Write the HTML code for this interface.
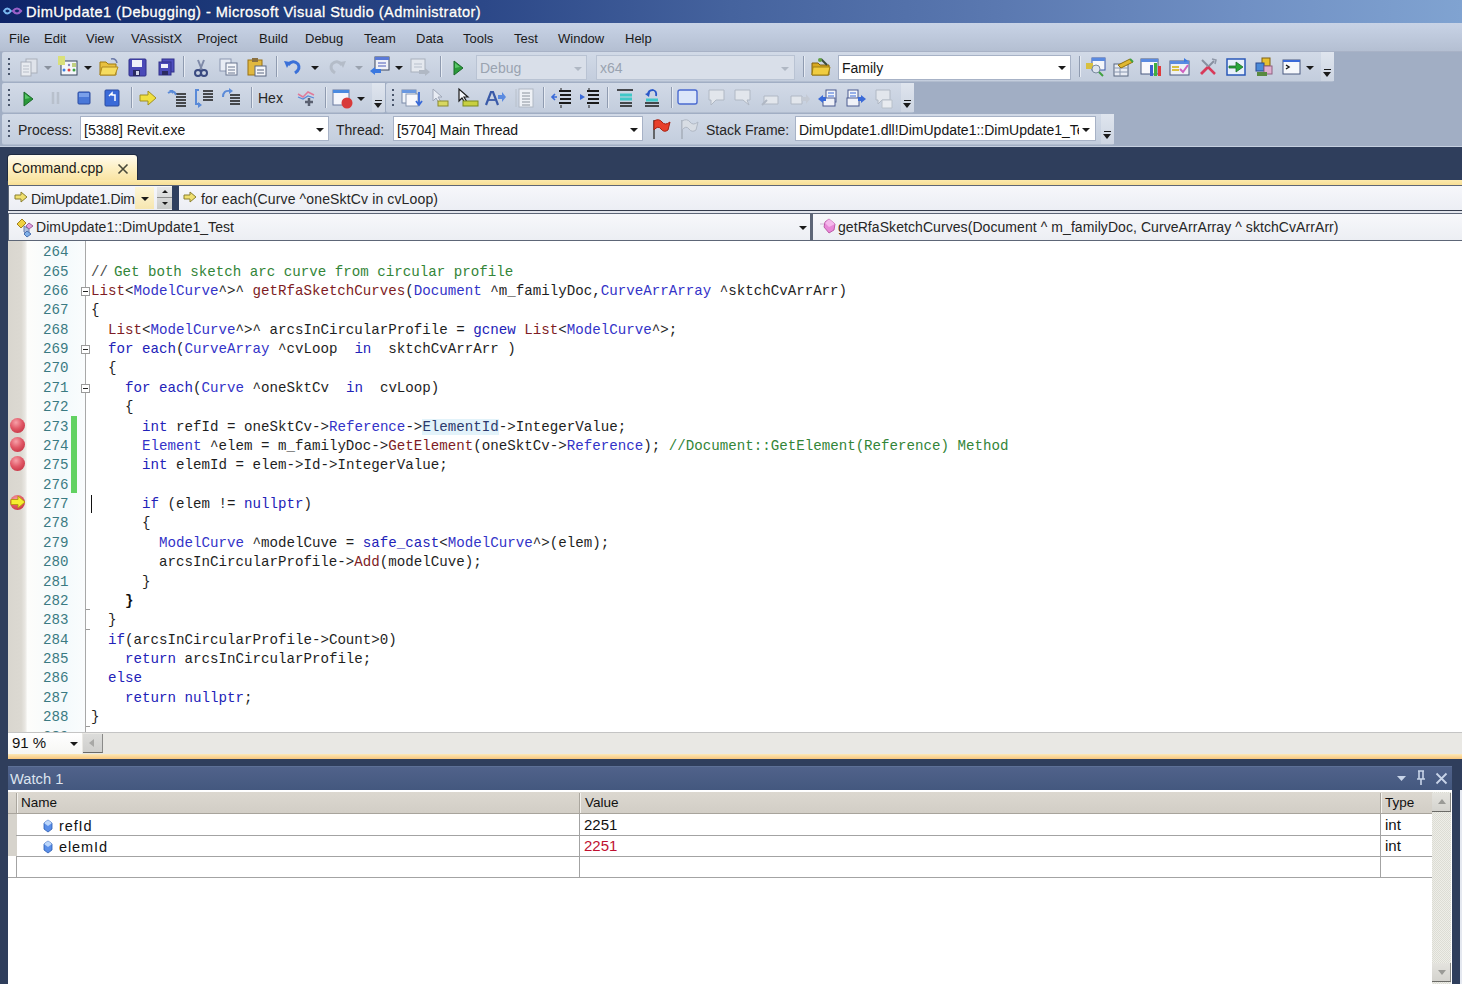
<!DOCTYPE html><html><head><meta charset="utf-8"><style>
*{margin:0;padding:0;box-sizing:border-box}
html,body{width:1462px;height:984px;overflow:hidden;background:#2f3e5c;font-family:"Liberation Sans",sans-serif;}
.a{position:absolute}
svg{position:absolute;overflow:visible}
#title{left:0;top:0;width:1462px;height:23px;background:linear-gradient(to right,#0e2468 0%,#1c3878 15%,#2c4888 33%,#45639e 50%,#5a78b0 68%,#7090c4 85%,#80a3d1 100%);color:#fff;font-size:14.6px;letter-spacing:0.45px;-webkit-text-stroke:0.35px #fff;}
#menu{left:0;top:23px;width:1462px;height:29px;background:linear-gradient(#c8d3e6,#b4bfd2);border-bottom:1px solid #a8b2c6;font-size:13px;color:#1a1a1a}
#menu span{position:absolute;top:8px}
#tray{left:0;top:52px;width:1462px;height:95px;background:#a1aec4}
.tb{position:absolute;background:linear-gradient(#d2dae7,#c3cddd);border-bottom:1px solid #b2bdcf;border-radius:2px}
.ovf{position:absolute;top:0;bottom:0;width:13px;right:0;background:linear-gradient(#dfe5ee,#cdd5e2)}
.grip{position:absolute;left:5px;width:2px;top:7px;height:19px;background:repeating-linear-gradient(#4a566c 0 2px,transparent 2px 5px)}
.sep{position:absolute;width:1px;top:5px;height:21px;background:#8f9bb0;box-shadow:1px 0 0 #e6ebf3}
.cb{position:absolute;background:#fff;border:1px solid #a7b2c6;font-size:14px;color:#161616;padding-left:3px;line-height:21px;white-space:nowrap;overflow:hidden}
.dd{position:absolute;width:0;height:0;border-left:4px solid transparent;border-right:4px solid transparent;border-top:4px solid #1a1a1a}
.lbl{position:absolute;font-size:14px;color:#262626;white-space:nowrap}
#code{left:8px;top:241px;width:1454px;height:492px;background:#fff;overflow:hidden}
.ln{position:absolute;left:19.5px;width:41px;text-align:right;font-family:"Liberation Mono",monospace;font-size:14.17px;color:#3a7a82;line-height:19.375px;height:19.375px}
.cl{position:absolute;left:83px;font-family:"Liberation Mono",monospace;font-size:14.17px;color:#1e1e1e;white-space:pre;line-height:19.375px;height:19.375px}
.k{color:#2222b8}.t{color:#3333c8}.f{color:#7e1c24}.c{color:#338538}
</style></head><body><div id="title" class="a"><span class="a" style="left:26px;top:3.5px;text-shadow:0 0 1px #0a1a40">DimUpdate1 (Debugging) - Microsoft Visual Studio (Administrator)</span><svg style="left:2px;top:4px" width="22" height="14" viewBox="0 0 22 14"><path d="M2 7 Q5 2 9 7 Q5 12 2 7Z" fill="none" stroke="#7ab8f0" stroke-width="2"/><path d="M11 7 Q15 2 19 7 Q15 12 11 7Z" fill="none" stroke="#9a60c8" stroke-width="2.2"/></svg></div><div id="menu" class="a"><span style="left:9px">File</span><span style="left:44px">Edit</span><span style="left:86px">View</span><span style="left:131px">VAssistX</span><span style="left:197px">Project</span><span style="left:259px">Build</span><span style="left:305px">Debug</span><span style="left:364px">Team</span><span style="left:416px">Data</span><span style="left:463px">Tools</span><span style="left:514px">Test</span><span style="left:558px">Window</span><span style="left:625px">Help</span></div><div id="tray" class="a"></div><div class="a" style="left:0;top:146px;width:1462px;height:1px;background:#c6d0e0"></div><div class="tb" style="left:2px;top:52px;width:1332px;height:30px"><div class="grip" style="left:6px;top:6px"></div><div class="ovf"><div class="a" style="left:3px;top:17px;width:7px;height:1px;background:#1a1a1a"></div><div class="dd" style="left:2px;top:20px;border-left-width:4px;border-right-width:4px;border-top-width:5px"></div></div></div><svg style="left:19px;top:57px" width="20" height="20" viewBox="0 0 20 20"><rect x="7" y="2" width="11" height="14" fill="#dfe3ea" stroke="#a9afba"/><rect x="2" y="5" width="10" height="14" fill="#e8ebf0" stroke="#aab0bb"/><path d="M4 9h6M4 12h6M4 15h6" stroke="#b9bec8"/></svg><div class="dd" style="left:44px;top:66px;border-top-color:#8a929e"></div><svg style="left:57px;top:56px" width="22" height="20" viewBox="0 0 22 20"><rect x="4" y="5" width="16" height="14" fill="#f4f6fa" stroke="#36465e"/><rect x="1" y="0" width="7" height="9" fill="#d9e07a"/><circle cx="7" cy="14" r="1.5" fill="#3a7ee0"/><circle cx="12" cy="14" r="1.5" fill="#e04040"/><circle cx="17" cy="14" r="1.5" fill="#3aa040"/><circle cx="12" cy="9" r="1.2" fill="#8080c0"/><rect x="15" y="7" width="4" height="4" fill="#c0d080"/></svg><div class="dd" style="left:84px;top:66px;border-top-color:#1a1a1a"></div><svg style="left:99px;top:57px" width="20" height="20" viewBox="0 0 20 20"><path d="M1 5h6l2 2h8v11H1z" fill="#e8c040" stroke="#a07a10"/><path d="M3 10h16l-3 8H1z" fill="#f6dc60" stroke="#b08a20"/><path d="M12 2q5 -1 6 4" fill="none" stroke="#6a78a8" stroke-width="1.5"/></svg><svg style="left:128px;top:58px" width="20" height="20" viewBox="0 0 20 20"><rect x="1" y="1" width="17" height="17" rx="1" fill="#4a4ab8" stroke="#30308a"/><rect x="4" y="2" width="10" height="7" fill="#f0f2fa"/><rect x="5" y="12" width="7" height="6" fill="#2a2a60"/><rect x="8" y="13" width="3" height="4" fill="#d0d4e8"/></svg><svg style="left:156px;top:58px" width="20" height="20" viewBox="0 0 20 20"><rect x="6" y="1" width="12" height="13" fill="#5050c0" stroke="#30308a"/><rect x="3" y="4" width="12" height="13" fill="#4a4ab8" stroke="#30308a"/><rect x="5" y="6" width="7" height="4" fill="#f0f2fa"/><rect x="6" y="13" width="6" height="4" fill="#2a2a60"/></svg><div class="a" style="left:183px;top:56px;width:1px;height:21px;background:#8f9bb0;box-shadow:1px 0 0 #e6ebf3"></div><svg style="left:193px;top:58px" width="16" height="20" viewBox="0 0 16 20"><path d="M5 2l4 10M11 2l-4 10" stroke="#7f8aa8" stroke-width="2"/><circle cx="5" cy="15" r="3" fill="none" stroke="#3a4a80" stroke-width="2"/><circle cx="11" cy="15" r="3" fill="none" stroke="#3a4a80" stroke-width="2"/></svg><svg style="left:219px;top:57px" width="20" height="20" viewBox="0 0 20 20"><rect x="1" y="2" width="11" height="12" fill="#e8ecf4" stroke="#8a96b0"/><rect x="7" y="6" width="11" height="12" fill="#f4f6fa" stroke="#6a7690"/><path d="M9 10h7M9 13h7M9 16h7" stroke="#6a7690"/></svg><svg style="left:247px;top:57px" width="20" height="20" viewBox="0 0 20 20"><rect x="1" y="3" width="14" height="15" fill="#e0b840" stroke="#9a7010"/><rect x="5" y="1" width="6" height="4" fill="#8a7040"/><rect x="8" y="9" width="11" height="10" fill="#f4f6fa" stroke="#5a6680"/><path d="M10 13h7M10 16h7" stroke="#5a6680"/></svg><div class="a" style="left:276px;top:56px;width:1px;height:21px;background:#8f9bb0;box-shadow:1px 0 0 #e6ebf3"></div><svg style="left:283px;top:57px" width="20" height="20" viewBox="0 0 20 20"><path d="M5 8 Q10 2 15 7 Q18 12 12 16" fill="none" stroke="#3a70d8" stroke-width="3"/><path d="M1 4l6 1-3 6z" fill="#3a70d8"/></svg><div class="dd" style="left:311px;top:66px;border-top-color:#1a1a1a"></div><svg style="left:327px;top:57px" width="20" height="20" viewBox="0 0 20 20"><path d="M15 8 Q10 2 5 7 Q2 12 8 16" fill="none" stroke="#b4bcc8" stroke-width="3"/><path d="M19 4l-6 1 3 6z" fill="#b4bcc8"/></svg><div class="dd" style="left:355px;top:66px;border-top-color:#9aa2ae"></div><svg style="left:369px;top:56px" width="22" height="22" viewBox="0 0 22 22"><rect x="6" y="1" width="14" height="13" fill="#f0f2f8" stroke="#3a4660"/><rect x="6" y="1" width="14" height="3" fill="#5a7ad8"/><path d="M9 7h8M9 10h8" stroke="#4a5ab8"/><path d="M1 15l5-4v2h6v4H6v2z" fill="#3a78e0"/></svg><div class="dd" style="left:395px;top:66px;border-top-color:#1a1a1a"></div><svg style="left:409px;top:57px" width="22" height="22" viewBox="0 0 22 22"><rect x="2" y="2" width="14" height="13" fill="#e4e8ee" stroke="#a8b0bc"/><path d="M5 7h8M5 10h8" stroke="#b8c0cc"/><path d="M21 15l-5-4v2h-6v4h6v2z" fill="#b0b8c4"/></svg><div class="a" style="left:440px;top:56px;width:1px;height:21px;background:#8f9bb0;box-shadow:1px 0 0 #e6ebf3"></div><svg style="left:451px;top:59px" width="14" height="18" viewBox="0 0 14 18"><path d="M3 2l9 7-9 7z" fill="#2a9a3a" stroke="#1a6a2a"/><path d="M4 4l5 4-5 1z" fill="#5ac86a"/></svg><div class="cb" style="left:476px;top:55px;width:111px;height:25px;line-height:25px;background:#d9dfe9;border-color:#b9c3d3;color:#9aa3b0">Debug</div><div class="dd" style="left:574px;top:67px;border-top-color:#b0b8c4"></div><div class="cb" style="left:596px;top:55px;width:199px;height:25px;line-height:25px;background:#d9dfe9;border-color:#b9c3d3;color:#9aa3b0">x64</div><div class="dd" style="left:781px;top:67px;border-top-color:#b0b8c4"></div><div class="a" style="left:803px;top:56px;width:1px;height:21px;background:#8f9bb0;box-shadow:1px 0 0 #e6ebf3"></div><svg style="left:811px;top:57px" width="20" height="20" viewBox="0 0 20 20"><path d="M1 6h6l2 2h9v10H1z" fill="#d8a820" stroke="#806010"/><path d="M2 10h17l-2 8H1z" fill="#f0cc40" stroke="#a08010"/><path d="M10 2l6 6" stroke="#3a4a3a" stroke-width="2"/><circle cx="9" cy="3" r="2" fill="#60a040"/></svg><div class="cb" style="left:838px;top:55px;width:233px;height:25px;line-height:24px">Family</div><div class="dd" style="left:1058px;top:66px;border-top-color:#1a1a1a"></div><div class="a" style="left:1079px;top:56px;width:1px;height:21px;background:#8f9bb0;box-shadow:1px 0 0 #e6ebf3"></div><svg style="left:1085px;top:57px" width="22" height="20" viewBox="0 0 22 20"><rect x="7" y="1" width="13" height="12" fill="#f4f6fa" stroke="#3a58a8"/><rect x="7" y="1" width="13" height="3" fill="#5a8ae0"/><path d="M1 6h7v6H1z" fill="#d8c040"/><circle cx="11" cy="12" r="4" fill="#dde4ee" stroke="#7a8aa0"/><path d="M14 15l4 4" stroke="#40a040" stroke-width="2"/></svg><svg style="left:1112px;top:57px" width="22" height="20" viewBox="0 0 22 20"><rect x="2" y="7" width="14" height="12" fill="#e8ecf4" stroke="#5a6880"/><path d="M2 11h14M2 15h14M8 7v12" stroke="#8a98b0"/><path d="M6 8l12-6 3 3-12 6z" fill="#e0b830" stroke="#907010"/><path d="M18 2l3 3" stroke="#40a040" stroke-width="2"/></svg><svg style="left:1140px;top:57px" width="22" height="20" viewBox="0 0 22 20"><rect x="1" y="2" width="17" height="15" fill="#f8f8fc" stroke="#4a5a80"/><rect x="1" y="2" width="17" height="3" fill="#5a8ae0"/><rect x="10" y="8" width="3" height="11" fill="#3a60d0"/><rect x="14" y="6" width="3" height="13" fill="#40b040"/><rect x="18" y="9" width="3" height="10" fill="#e03a3a"/></svg><svg style="left:1169px;top:57px" width="22" height="20" viewBox="0 0 22 20"><rect x="1" y="4" width="19" height="14" fill="#eef0f6" stroke="#4a5a80"/><rect x="1" y="4" width="19" height="3" fill="#5a8ae0"/><path d="M3 10h7M3 13h7" stroke="#d8c040" stroke-width="2"/><path d="M11 12l3 3 5-7" fill="none" stroke="#d060c0" stroke-width="2"/><path d="M15 1l4 3-4 1z" fill="#3a78e0"/></svg><svg style="left:1198px;top:57px" width="20" height="20" viewBox="0 0 20 20"><path d="M3 17L10 10" stroke="#d83a5a" stroke-width="2.8"/><path d="M10 10L16 4" stroke="#8890a0" stroke-width="2"/><path d="M4 3l6 6" stroke="#8890a0" stroke-width="2"/><path d="M10 10l7 7" stroke="#d83a5a" stroke-width="2.5"/><path d="M14 2l4 1-1 4" fill="none" stroke="#9098a8" stroke-width="1.5"/></svg><svg style="left:1226px;top:57px" width="20" height="20" viewBox="0 0 20 20"><rect x="1" y="2" width="18" height="16" fill="#e8f0fa" stroke="#2a58b8" stroke-width="1.5"/><path d="M3 9h7V5l7 5-7 5v-4H3z" fill="#2aa83a" stroke="#1a6a2a" stroke-width=".8"/></svg><svg style="left:1254px;top:57px" width="20" height="20" viewBox="0 0 20 20"><rect x="8" y="1" width="8" height="8" fill="#e8c030" stroke="#806010"/><rect x="2" y="6" width="8" height="8" fill="#4a8ad8" stroke="#2a4a90"/><rect x="10" y="9" width="8" height="8" fill="#e0b0d0" stroke="#906080"/><rect x="3" y="15" width="10" height="4" fill="#5a8a40"/></svg><svg style="left:1282px;top:57px" width="20" height="20" viewBox="0 0 20 20"><rect x="1" y="3" width="17" height="14" fill="#f6f8fc" stroke="#4a5a80"/><rect x="1" y="3" width="17" height="2" fill="#3a6ad8"/><path d="M4 8l3 2-3 2" fill="none" stroke="#1a1a1a" stroke-width="1.5"/></svg><div class="dd" style="left:1306px;top:66px;border-top-color:#1a1a1a"></div><div class="tb" style="left:2px;top:83px;width:383px;height:30px"><div class="grip" style="left:6px;top:6px"></div><div class="ovf"><div class="a" style="left:3px;top:17px;width:7px;height:1px;background:#1a1a1a"></div><div class="dd" style="left:2px;top:20px;border-left-width:4px;border-right-width:4px;border-top-width:5px"></div></div></div><svg style="left:21px;top:90px" width="14" height="18" viewBox="0 0 14 18"><path d="M3 2l9 7-9 7z" fill="#2a9a3a" stroke="#1a6a2a"/><path d="M4 4l5 4-5 1z" fill="#5ac86a"/></svg><svg style="left:49px;top:89px" width="14" height="18" viewBox="0 0 14 18"><path d="M4 3v12M9 3v12" stroke="#b8c0cc" stroke-width="2.5"/></svg><svg style="left:77px;top:91px" width="14" height="14" viewBox="0 0 14 14"><rect x="1" y="1" width="12" height="12" rx="1" fill="#4a78d8" stroke="#2a4aa0"/><rect x="2" y="2" width="10" height="4" fill="#7aa0ea"/></svg><svg style="left:104px;top:89px" width="16" height="18" viewBox="0 0 16 18"><rect x="1" y="1" width="14" height="16" rx="1" fill="#3a6ad8" stroke="#2a4aa0"/><path d="M5 7l3-3v2h3v6" fill="none" stroke="#fff" stroke-width="1.5"/></svg><div class="a" style="left:131px;top:87px;width:1px;height:21px;background:#8f9bb0;box-shadow:1px 0 0 #e6ebf3"></div><svg style="left:139px;top:90px" width="18" height="16" viewBox="0 0 18 16"><path d="M1 5h8V1l8 7-8 7v-4H1z" fill="#f0e040" stroke="#a09020"/></svg><svg style="left:166px;top:88px" width="22" height="20" viewBox="0 0 22 20"><path d="M10 6h10M10 9h10M10 12h10M10 15h10M10 18h10" stroke="#1a1a1a" stroke-width="1.6"/><path d="M2 5 Q8 1 10 7" fill="none" stroke="#5a8ad8" stroke-width="2"/><path d="M3 2h4v4" fill="#5a8ad8"/></svg><svg style="left:194px;top:87px" width="22" height="22" viewBox="0 0 22 22"><path d="M9 4h10M9 7h10M9 10h10M9 13h10" stroke="#1a1a1a" stroke-width="1.6"/><path d="M5 3H2v14h4" fill="none" stroke="#5a8ad8" stroke-width="2"/><path d="M4 15l4 3-4 3z" fill="#5a8ad8"/></svg><svg style="left:221px;top:87px" width="22" height="22" viewBox="0 0 22 22"><path d="M9 8h10M9 11h10M9 14h10M9 17h10" stroke="#1a1a1a" stroke-width="1.6"/><path d="M2 10 Q2 3 9 4" fill="none" stroke="#5a8ad8" stroke-width="2"/><path d="M8 1l4 3-4 3z" fill="#5a8ad8"/></svg><div class="a" style="left:251px;top:87px;width:1px;height:21px;background:#8f9bb0;box-shadow:1px 0 0 #e6ebf3"></div><div class="lbl" style="left:258px;top:90px">Hex</div><svg style="left:297px;top:88px" width="20" height="20" viewBox="0 0 20 20"><path d="M1 6l5 3 5-5 6 3" fill="none" stroke="#e07a9a" stroke-width="1.5"/><path d="M1 9l5 2 5-3 6 2" fill="none" stroke="#5a8ad8" stroke-width="1.2"/><path d="M12 10v8M8 14h8" stroke="#5a6070" stroke-width="2.5"/></svg><div class="a" style="left:325px;top:87px;width:1px;height:21px;background:#8f9bb0;box-shadow:1px 0 0 #e6ebf3"></div><svg style="left:332px;top:88px" width="22" height="22" viewBox="0 0 22 22"><rect x="1" y="2" width="16" height="15" fill="#f4f6fc" stroke="#6a7aa0"/><rect x="1" y="2" width="16" height="3" fill="#4a8ae0"/><circle cx="15" cy="15" r="5.5" fill="#d83a3a"/></svg><div class="dd" style="left:357px;top:97px;border-top-color:#1a1a1a"></div><div class="tb" style="left:386px;top:83px;width:528px;height:30px"><div class="grip" style="left:6px;top:6px"></div><div class="ovf"><div class="a" style="left:3px;top:17px;width:7px;height:1px;background:#1a1a1a"></div><div class="dd" style="left:2px;top:20px;border-left-width:4px;border-right-width:4px;border-top-width:5px"></div></div></div><svg style="left:401px;top:88px" width="22" height="20" viewBox="0 0 22 20"><rect x="1" y="2" width="14" height="13" fill="#f0f4fa" stroke="#7a8aa8"/><rect x="1" y="2" width="14" height="3" fill="#6a98e0"/><rect x="5" y="6" width="12" height="12" fill="#f8f8fc" stroke="#8a98b0"/><path d="M18 4v12M15 13l3 4 3-4" fill="none" stroke="#3a6ad8" stroke-width="1.8"/></svg><svg style="left:429px;top:88px" width="22" height="20" viewBox="0 0 22 20"><path d="M4 1v12l3-3 3 5 2-1-3-5h4z" fill="#e8ecf4" stroke="#a0a8b8"/><rect x="9" y="13" width="10" height="5" fill="#d8d860" stroke="#8a8a30"/></svg><svg style="left:457px;top:88px" width="22" height="20" viewBox="0 0 22 20"><path d="M2 1v12l3-3 3 5 2-1-3-5h4z" fill="#f4f6fa" stroke="#1a1a1a" stroke-width="1.2"/><rect x="6" y="13" width="15" height="5" fill="#c8d040" stroke="#7a8a20"/></svg><svg style="left:485px;top:88px" width="22" height="20" viewBox="0 0 22 20"><path d="M1 17l5-13h2l5 13" fill="none" stroke="#3a5aa8" stroke-width="2.2"/><path d="M3 12h7" stroke="#3a5aa8" stroke-width="1.8"/><path d="M13 7h4V4l4 5-4 5v-3h-4z" fill="#5a8ae0"/></svg><svg style="left:514px;top:88px" width="20" height="20" viewBox="0 0 20 20"><rect x="5" y="1" width="14" height="18" fill="#eef1f6" stroke="#b0b8c4"/><path d="M8 5h8M8 8h8M8 11h8M8 14h8M8 17h8" stroke="#8a929c"/><path d="M2 1v18" stroke="#b8c0ca"/></svg><div class="a" style="left:543px;top:87px;width:1px;height:21px;background:#8f9bb0;box-shadow:1px 0 0 #e6ebf3"></div><svg style="left:551px;top:88px" width="22" height="20" viewBox="0 0 22 20"><path d="M8 3h12M9 7h11M9 11h11M8 15h12" stroke="#1a1a1a" stroke-width="2"/><path d="M6 9L1 9M4 6l-3 3 3 3" fill="none" stroke="#3a6ad8" stroke-width="1.6"/><path d="M10 0v2M10 17v3" stroke="#1a1a1a"/></svg><svg style="left:579px;top:88px" width="22" height="20" viewBox="0 0 22 20"><path d="M8 3h12M9 7h11M9 11h11M8 15h12" stroke="#1a1a1a" stroke-width="2"/><path d="M1 6l5 3-5 3z" fill="#3a6ad8"/><path d="M10 0v2M10 17v3" stroke="#1a1a1a"/></svg><div class="a" style="left:607px;top:87px;width:1px;height:21px;background:#8f9bb0;box-shadow:1px 0 0 #e6ebf3"></div><svg style="left:615px;top:88px" width="20" height="20" viewBox="0 0 20 20"><path d="M2 2h16M5 18h12" stroke="#1a1a1a" stroke-width="1.5"/><path d="M5 7h12M5 11h12" stroke="#40c8c8" stroke-width="3"/><path d="M5 15h12" stroke="#1a1a1a" stroke-width="1.5"/></svg><svg style="left:642px;top:88px" width="20" height="20" viewBox="0 0 20 20"><path d="M3 15h14M3 18h14" stroke="#1a1a1a" stroke-width="1.5"/><path d="M4 12h12" stroke="#40c8c8" stroke-width="3"/><path d="M6 7 Q6 2 11 2 Q15 3 14 8" fill="none" stroke="#2a58c8" stroke-width="1.8"/><path d="M3 6l4 3 1-5z" fill="#2a58c8"/></svg><div class="a" style="left:671px;top:87px;width:1px;height:21px;background:#8f9bb0;box-shadow:1px 0 0 #e6ebf3"></div><svg style="left:677px;top:88px" width="22" height="18" viewBox="0 0 22 18"><rect x="1" y="2" width="19" height="14" rx="2" fill="#dbe6fa" stroke="#4a6ad0" stroke-width="1.4"/></svg><svg style="left:705px;top:88px" width="22" height="20" viewBox="0 0 22 20"><path d="M4 2h15v10h-8l-5 5v-5H4z" fill="#e2e6ec" stroke="#b0b8c4"/></svg><svg style="left:733px;top:88px" width="22" height="20" viewBox="0 0 22 20"><path d="M2 2h15v10h-3l2 5-6-5H2z" fill="#e2e6ec" stroke="#b0b8c4"/></svg><svg style="left:761px;top:88px" width="22" height="20" viewBox="0 0 22 20"><path d="M3 8h14v8H3z" fill="#e2e6ec" stroke="#b0b8c4"/><path d="M1 17l5-5" stroke="#b0b8c4" stroke-width="2"/></svg><svg style="left:789px;top:88px" width="22" height="20" viewBox="0 0 22 20"><path d="M2 8h11v8H2z" fill="#e2e6ec" stroke="#b0b8c4"/><path d="M12 9h5V6l4 5-4 5v-3h-5z" fill="#c4cad4"/></svg><svg style="left:817px;top:88px" width="22" height="20" viewBox="0 0 22 20"><rect x="9" y="2" width="10" height="12" fill="#f4f6fa" stroke="#4a5a90"/><path d="M11 5h6M11 8h6" stroke="#3a6ad8"/><rect x="6" y="10" width="12" height="8" fill="#f0f2f8" stroke="#4a5a90"/><path d="M1 11l5-4v2h3v4H6v2z" fill="#3a6ad8"/></svg><svg style="left:845px;top:88px" width="22" height="20" viewBox="0 0 22 20"><rect x="3" y="2" width="10" height="12" fill="#f4f6fa" stroke="#4a5a90"/><path d="M5 5h6M5 8h6" stroke="#3a6ad8"/><rect x="2" y="10" width="12" height="8" fill="#f0f2f8" stroke="#4a5a90"/><path d="M21 11l-5-4v2h-3v4h3v2z" fill="#3a6ad8"/></svg><svg style="left:873px;top:88px" width="22" height="22" viewBox="0 0 22 22"><path d="M3 2h14v10H9l-4 4v-4H3z" fill="#e2e6ec" stroke="#b0b8c4"/><path d="M9 12h10v8H9z" fill="#e8ebf0" stroke="#b8c0ca"/></svg><div class="tb" style="left:2px;top:114px;width:1112px;height:31px"><div class="grip" style="left:6px;top:6px"></div><div class="ovf"><div class="a" style="left:3px;top:17px;width:7px;height:1px;background:#1a1a1a"></div><div class="dd" style="left:2px;top:20px;border-left-width:4px;border-right-width:4px;border-top-width:5px"></div></div></div><div class="lbl" style="left:18px;top:122px">Process:</div><div class="cb" style="left:80px;top:116px;width:249px;height:25px;line-height:26px">[5388] Revit.exe</div><div class="dd" style="left:316px;top:128px;border-top-color:#1a1a1a"></div><div class="lbl" style="left:336px;top:122px">Thread:</div><div class="cb" style="left:393px;top:116px;width:250px;height:25px;line-height:26px">[5704] Main Thread</div><div class="dd" style="left:630px;top:128px;border-top-color:#1a1a1a"></div><svg style="left:651px;top:118px" width="20" height="22" viewBox="0 0 20 22"><path d="M3 2v19" stroke="#4a4a4a" stroke-width="1.6"/><path d="M3 3q5-3 8 1t8 0l-2 8q-4 3-7-1t-7 1z" fill="#e8402a" stroke="#a82010"/></svg><svg style="left:679px;top:118px" width="20" height="22" viewBox="0 0 20 22"><path d="M3 2v19" stroke="#a8b0bc" stroke-width="1.6"/><path d="M3 3q5-3 8 1t8 0l-2 8q-4 3-7-1t-7 1z" fill="#d8dde4" stroke="#b0b8c4"/></svg><div class="lbl" style="left:706px;top:122px">Stack Frame:</div><div class="cb" style="left:795px;top:116px;width:301px;height:25px;line-height:26px"><span style="display:inline-block;width:280px;overflow:hidden;vertical-align:top">DimUpdate1.dll!DimUpdate1::DimUpdate1_Te</span></div><div class="dd" style="left:1082px;top:128px;border-top-color:#1a1a1a"></div><div class="a" style="left:7px;top:154px;width:131px;height:27px;border-radius:4px 4px 0 0;background:#1e2a40"></div><div class="a" style="left:8px;top:155px;width:129px;height:26px;border-radius:3px 3px 0 0;background:linear-gradient(#fffbee,#fdf0c4 50%,#f9e3a0);"></div><div class="a" style="left:12px;top:160px;font-size:14px;color:#1a1a1a">Command.cpp</div><svg style="left:117px;top:163px" width="12" height="12" viewBox="0 0 12 12"><path d="M1.5 1.5l9 9M10.5 1.5l-9 9" stroke="#4a4a3a" stroke-width="1.6"/></svg><div class="a" style="left:8px;top:180px;width:1454px;height:5px;background:linear-gradient(#fbe9ae,#f8df95)"></div><div class="a" style="left:8px;top:185px;width:1454px;height:56px;background:#5d6677"></div><div class="a" style="left:9px;top:186px;width:163px;height:24px;background:linear-gradient(#f6f7fb,#eceef4)"></div><div class="a" style="left:135px;top:187px;width:19px;height:22px;background:linear-gradient(#fdf6d8,#f6e6b0)"></div><div class="dd" style="left:141px;top:197px;border-top-color:#1a1a1a"></div><div class="a" style="left:157px;top:187px;width:15px;height:22px;background:linear-gradient(#e8e9ea,#c8cac8)"></div><div class="a" style="left:157px;top:197px;width:15px;height:1px;background:#8a8c8c"></div><div class="a" style="left:162px;top:190px;width:0;height:0;border-left:3px solid transparent;border-right:3px solid transparent;border-bottom:3px solid #1a1a1a"></div><div class="a" style="left:162px;top:202px;width:0;height:0;border-left:3px solid transparent;border-right:3px solid transparent;border-top:3px solid #1a1a1a"></div><div class="a" style="left:172px;top:186px;width:7px;height:25px;background:#2e3f5f"></div><div class="a" style="left:179px;top:186px;width:1283px;height:24px;background:linear-gradient(#f6f7fb,#eceef4)"></div><svg style="left:14px;top:191px" width="14" height="12" viewBox="0 0 14 12"><path d="M1 4h6V1l6 5-6 5V8H1z" fill="#f0e070" stroke="#8a8030"/></svg><div class="lbl" style="left:31px;top:191px;width:105px;overflow:hidden;letter-spacing:-0.2px">DimUpdate1.Dim</div><svg style="left:183px;top:191px" width="14" height="12" viewBox="0 0 14 12"><path d="M1 4h6V1l6 5-6 5V8H1z" fill="#f0e070" stroke="#8a8030"/></svg><div class="lbl" style="left:201px;top:191px;letter-spacing:0.14px">for each(Curve ^oneSktCv in cvLoop)</div><div class="a" style="left:8px;top:210px;width:1454px;height:1px;background:#343c4c"></div><div class="a" style="left:8px;top:211px;width:1454px;height:2px;background:#e2e5ec"></div><div class="a" style="left:9px;top:214px;width:801px;height:26px;background:linear-gradient(#f7f8fb,#eceef3)"></div><div class="a" style="left:813px;top:214px;width:649px;height:26px;background:linear-gradient(#f7f8fb,#eceef3)"></div><div class="dd" style="left:799px;top:226px;border-top-color:#1a1a1a"></div><svg style="left:15px;top:218px" width="20" height="20" viewBox="0 0 20 20"><path d="M2 6l5-5 4 4-5 5z" fill="#f0d040" stroke="#a08020"/><path d="M9 8l5 3v6l-5-3z" fill="#b0c0e0" stroke="#6a80b0"/><path d="M14 5l4 3-4 3-3-3z" fill="#e0a0e0" stroke="#a060a0"/><path d="M12 13l4 3-4 3-3-3z" fill="#80b0e8" stroke="#4a70b0"/></svg><div class="lbl" style="left:36px;top:219px;letter-spacing:0.04px">DimUpdate1::DimUpdate1_Test</div><svg style="left:819px;top:218px" width="18" height="16" viewBox="0 0 18 16"><path d="M1 6h5" stroke="#d0b8d8"/><path d="M10 1l6 5-1 6-5 3-5-6 1-5z" fill="#e888d8" stroke="#b04898" stroke-width=".8"/><path d="M10 1l6 5-6 3-4-4z" fill="#f4b8ec"/></svg><div class="lbl" style="left:838px;top:219px;letter-spacing:0.07px">getRfaSketchCurves(Document ^ m_familyDoc, CurveArrArray ^ sktchCvArrArr)</div><div id="code" class="a"><div class="a" style="left:0;top:0;width:19px;height:492px;background:linear-gradient(to right,#d9d6cf 0%,#dcd9d2 70%,#e9e7e2 90%,#f8f8f6 100%)"></div><div class="a" style="left:19px;top:0;width:58px;height:492px;background:linear-gradient(to right,#fdfdfb,#f4fafc 60%,#fafcfd)"></div><div class="a" style="left:77px;top:0;width:1px;height:492px;background:#a8a8a8"></div><div class="a" style="left:63px;top:175px;width:6px;height:77px;background:#62d262"></div><div class="ln" style="top:2.20px">264</div><div class="ln" style="top:21.57px">265</div><div class="cl" style="top:21.57px"><span style="color:#4a4a4a">// </span><span class="c" style="margin-left:-2.6px">Get both sketch arc curve from circular profile</span></div><div class="ln" style="top:40.95px">266</div><div class="cl" style="top:40.95px"><span class="f">List</span>&lt;<span class="t">ModelCurve</span>^&gt;^ <span class="f">getRfaSketchCurves</span>(<span class="t">Document</span> ^m_familyDoc,<span class="t">CurveArrArray</span> ^sktchCvArrArr)</div><div class="ln" style="top:60.33px">267</div><div class="cl" style="top:60.33px">{</div><div class="ln" style="top:79.70px">268</div><div class="cl" style="top:79.70px">  <span class="f">List</span>&lt;<span class="t">ModelCurve</span>^&gt;^ arcsInCircularProfile = <span class="k">gcnew</span> <span class="f">List</span>&lt;<span class="t">ModelCurve</span>^&gt;;</div><div class="ln" style="top:99.08px">269</div><div class="cl" style="top:99.08px">  <span class="k">for each</span>(<span class="t">CurveArray</span> ^cvLoop  <span class="k">in</span>  sktchCvArrArr )</div><div class="ln" style="top:118.45px">270</div><div class="cl" style="top:118.45px">  {</div><div class="ln" style="top:137.82px">271</div><div class="cl" style="top:137.82px">    <span class="k">for each</span>(<span class="t">Curve</span> ^oneSktCv  <span class="k">in</span>  cvLoop)</div><div class="ln" style="top:157.20px">272</div><div class="cl" style="top:157.20px">    {</div><div class="ln" style="top:176.57px">273</div><div class="cl" style="top:176.57px">      <span class="k">int</span> refId = oneSktCv-&gt;<span class="t">Reference</span>-&gt;<span style="color:#2c3a6c;background:#e3f3fa">ElementId</span>-&gt;IntegerValue;</div><div class="ln" style="top:195.95px">274</div><div class="cl" style="top:195.95px">      <span class="t">Element</span> ^elem = m_familyDoc-&gt;<span class="f">GetElement</span>(oneSktCv-&gt;<span class="t">Reference</span>); <span class="c">//Document::GetElement(Reference) Method</span></div><div class="ln" style="top:215.32px">275</div><div class="cl" style="top:215.32px">      <span class="k">int</span> elemId = elem-&gt;Id-&gt;IntegerValue;</div><div class="ln" style="top:234.70px">276</div><div class="ln" style="top:254.07px">277</div><div class="cl" style="top:254.07px">      <span class="k">if</span> (elem != <span class="k">nullptr</span>)</div><div class="ln" style="top:273.45px">278</div><div class="cl" style="top:273.45px">      {</div><div class="ln" style="top:292.82px">279</div><div class="cl" style="top:292.82px">        <span class="t">ModelCurve</span> ^modelCuve = <span class="k">safe_cast</span>&lt;<span class="t">ModelCurve</span>^&gt;(elem);</div><div class="ln" style="top:312.20px">280</div><div class="cl" style="top:312.20px">        arcsInCircularProfile-&gt;<span class="f">Add</span>(modelCuve);</div><div class="ln" style="top:331.57px">281</div><div class="cl" style="top:331.57px">      }</div><div class="ln" style="top:350.95px">282</div><div class="cl" style="top:350.95px">    <span style="font-weight:bold;color:#111">}</span></div><div class="ln" style="top:370.32px">283</div><div class="cl" style="top:370.32px">  }</div><div class="ln" style="top:389.70px">284</div><div class="cl" style="top:389.70px">  <span class="k">if</span>(arcsInCircularProfile-&gt;Count&gt;0)</div><div class="ln" style="top:409.07px">285</div><div class="cl" style="top:409.07px">    <span class="k">return</span> arcsInCircularProfile;</div><div class="ln" style="top:428.45px">286</div><div class="cl" style="top:428.45px">  <span class="k">else</span></div><div class="ln" style="top:447.82px">287</div><div class="cl" style="top:447.82px">    <span class="k">return</span> <span class="k">nullptr</span>;</div><div class="ln" style="top:467.20px">288</div><div class="cl" style="top:467.20px">}</div><div class="ln" style="top:486.57px">289</div><div class="a" style="left:73px;top:46.0px;width:9px;height:9px;background:#fff;border:1px solid #9a9a9a"><div class="a" style="left:1px;top:3px;width:5px;height:1px;background:#222"></div></div><div class="a" style="left:73px;top:104.1px;width:9px;height:9px;background:#fff;border:1px solid #9a9a9a"><div class="a" style="left:1px;top:3px;width:5px;height:1px;background:#222"></div></div><div class="a" style="left:73px;top:142.8px;width:9px;height:9px;background:#fff;border:1px solid #9a9a9a"><div class="a" style="left:1px;top:3px;width:5px;height:1px;background:#222"></div></div><div class="a" style="left:78px;top:368.3px;width:4px;height:1px;background:#9a9a9a"></div><div class="a" style="left:78px;top:387.7px;width:4px;height:1px;background:#9a9a9a"></div><div class="a" style="left:78px;top:484.6px;width:4px;height:1px;background:#9a9a9a"></div><div class="a" style="left:2px;top:176.7px;width:15px;height:15px;border-radius:50%;background:radial-gradient(circle at 40% 30%,#f7a0a8 0%,#e05866 45%,#c83848 80%,#a82a3a 100%)"></div><div class="a" style="left:2px;top:196.0px;width:15px;height:15px;border-radius:50%;background:radial-gradient(circle at 40% 30%,#f7a0a8 0%,#e05866 45%,#c83848 80%,#a82a3a 100%)"></div><div class="a" style="left:2px;top:215.4px;width:15px;height:15px;border-radius:50%;background:radial-gradient(circle at 40% 30%,#f7a0a8 0%,#e05866 45%,#c83848 80%,#a82a3a 100%)"></div><div class="a" style="left:2px;top:254.4px;width:15px;height:15px;border-radius:50%;background:radial-gradient(circle at 40% 30%,#f7a0a8 0%,#e05866 45%,#c83848 80%,#a82a3a 100%)"></div><svg style="left:2px;top:254px" width="16" height="14" viewBox="0 0 16 14"><path d="M1 4.5h7V1l7 6-7 6V9.5H1z" fill="#f6ee30" stroke="#b89a10" stroke-width="1"/></svg><div class="a" style="left:83px;top:253.6px;width:1px;height:18px;background:#111"></div></div><div class="a" style="left:8px;top:732px;width:1454px;height:1px;background:#c4c4c4"></div><div class="a" style="left:8px;top:733px;width:1454px;height:21px;background:#e9e8e4"></div><div class="a" style="left:8px;top:733px;width:74px;height:21px;background:linear-gradient(#ffffff,#f6f6f4)"></div><div class="a" style="left:12px;top:734px;font-size:15px;color:#111">91 %</div><div class="dd" style="left:70px;top:742px;border-top-color:#1a1a1a"></div><div class="a" style="left:83px;top:734px;width:20px;height:19px;background:linear-gradient(#dcdcda,#cfcfcd);border-right:1px solid #8a8a88;border-bottom:1px solid #6a6a68"></div><div class="a" style="left:89px;top:739px;width:0;height:0;border-top:4px solid transparent;border-bottom:4px solid transparent;border-right:5px solid #a8a8a6"></div><div class="a" style="left:8px;top:754px;width:1454px;height:5px;background:linear-gradient(#fde9b8,#f7c57c)"></div><div class="a" style="left:8px;top:766px;width:1444px;height:24px;background:linear-gradient(#50628a,#44587f);border-top:1px solid #5d7096"></div><div class="a" style="left:10px;top:771px;font-size:14.7px;color:#dde4ef">Watch 1</div><svg style="left:1395px;top:773px" width="14" height="10" viewBox="0 0 14 10"><path d="M2 3h9l-4.5 5z" fill="#c8d4e8"/></svg><svg style="left:1414px;top:770px" width="14" height="16" viewBox="0 0 14 16"><path d="M4 1h6M5 1v8h4V1M3 9h8M7 9v6" stroke="#c8d4e8" stroke-width="1.6" fill="none"/></svg><svg style="left:1435px;top:772px" width="14" height="13" viewBox="0 0 14 13"><path d="M1.5 1.5l10 10M11.5 1.5l-10 10" stroke="#c8d4e8" stroke-width="1.8"/></svg><div class="a" style="left:1452px;top:767px;width:10px;height:217px;background:#2f3e5c"></div><div class="a" style="left:1460px;top:790px;width:2px;height:194px;background:#e4e8f0"></div><div class="a" style="left:8px;top:790px;width:1444px;height:194px;background:#fff"></div><div class="a" style="left:8px;top:792px;width:1424px;height:22px;background:linear-gradient(#dcd8d0,#d2cec6);border-bottom:1px solid #a8a49c"></div><div class="a" style="left:16px;top:793px;width:1px;height:20px;background:#aaa69e;box-shadow:1px 0 0 #f4f2ee"></div><div class="a" style="left:579px;top:793px;width:1px;height:20px;background:#aaa69e;box-shadow:1px 0 0 #f4f2ee"></div><div class="a" style="left:1380px;top:793px;width:1px;height:20px;background:#aaa69e;box-shadow:1px 0 0 #f4f2ee"></div><div class="a" style="left:21px;top:795px;font-size:13.5px;color:#111">Name</div><div class="a" style="left:585px;top:795px;font-size:13.5px;color:#111">Value</div><div class="a" style="left:1385px;top:795px;font-size:13.5px;color:#111">Type</div><div class="a" style="left:8px;top:814px;width:9px;height:42px;background:#d6d3cc"></div><div class="a" style="left:16px;top:835px;width:1416px;height:1px;background:#a3a3a3"></div><div class="a" style="left:16px;top:856px;width:1416px;height:1px;background:#a3a3a3"></div><div class="a" style="left:16px;top:877px;width:1416px;height:1px;background:#a3a3a3"></div><div class="a" style="left:8px;top:877px;width:9px;height:1px;background:#a3a3a3"></div><div class="a" style="left:16px;top:857px;width:1px;height:20px;background:#a3a3a3"></div><div class="a" style="left:579px;top:814px;width:1px;height:63px;background:#a3a3a3"></div><div class="a" style="left:1380px;top:814px;width:1px;height:63px;background:#a3a3a3"></div><svg style="left:43px;top:820px" width="10" height="12" viewBox="0 0 10 12"><path d="M5 0l4 3v6l-4 3-4-3V3z" fill="#5a8ee8" stroke="#2a5ab0" stroke-width=".8"/><path d="M5 0l4 3-4 3-4-3z" fill="#bcd6fa"/></svg><div class="a" style="left:59px;top:818px;font-size:14.5px;letter-spacing:0.9px;color:#111">refId</div><svg style="left:43px;top:841px" width="10" height="12" viewBox="0 0 10 12"><path d="M5 0l4 3v6l-4 3-4-3V3z" fill="#5a8ee8" stroke="#2a5ab0" stroke-width=".8"/><path d="M5 0l4 3-4 3-4-3z" fill="#bcd6fa"/></svg><div class="a" style="left:59px;top:839px;font-size:14.5px;letter-spacing:0.9px;color:#111">elemId</div><div class="a" style="left:584px;top:816px;font-size:15px;color:#111">2251</div><div class="a" style="left:584px;top:837px;font-size:15px;color:#c01030">2251</div><div class="a" style="left:1385px;top:816px;font-size:15px;color:#111">int</div><div class="a" style="left:1385px;top:837px;font-size:15px;color:#111">int</div><div class="a" style="left:1432px;top:792px;width:19px;height:192px;background:repeating-conic-gradient(#eeeee8 0 25%,#dcdcd4 0 50%) 0 0/2px 2px"></div><div class="a" style="left:1432px;top:793px;width:19px;height:19px;background:linear-gradient(#e4e3de,#d4d3ce);border-right:1px solid #8a8a86;border-bottom:1px solid #6a6a66"></div><div class="a" style="left:1438px;top:799px;width:0;height:0;border-left:4px solid transparent;border-right:4px solid transparent;border-bottom:5px solid #9a9a96"></div><div class="a" style="left:1432px;top:963px;width:19px;height:19px;background:linear-gradient(#e4e3de,#d4d3ce);border-right:1px solid #8a8a86;border-bottom:1px solid #6a6a66"></div><div class="a" style="left:1438px;top:970px;width:0;height:0;border-left:4px solid transparent;border-right:4px solid transparent;border-top:5px solid #9a9a96"></div></body></html>
